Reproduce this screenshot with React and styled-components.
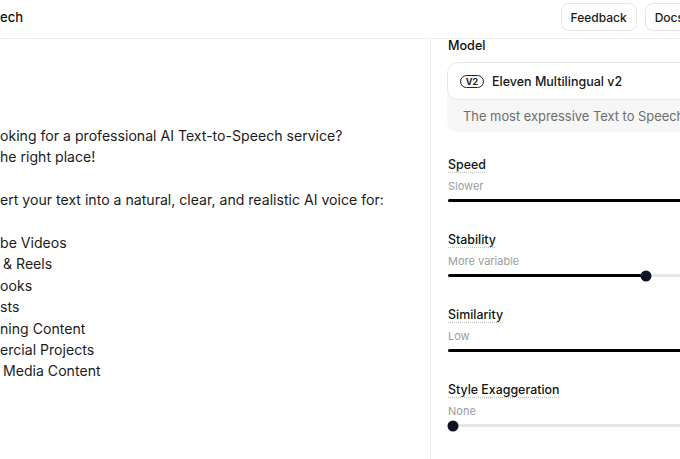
import React from "react";
import styled, { createGlobalStyle } from "styled-components";

const GlobalStyle = createGlobalStyle`
  html, body {
    margin: 0;
    padding: 0;
    background: #ffffff;
    overflow: hidden;
  }
  body {
    font-family: Inter, "Noto Sans", "Liberation Sans", sans-serif;
    color: #1a1a1a;
  }
`;

const Page = styled.div`
  width: 760px;
  height: 459px;
  display: flex;
  flex-direction: column;
`;

const Header = styled.header`
  height: 38px;
  display: flex;
  align-items: center;
  border-bottom: 1px solid #efefef;
  padding-right: 66px;
  flex-shrink: 0;
`;

const Title = styled.div`
  flex: 1;
  font-size: 13px;
  font-weight: 500;
  color: #111;
  margin-top: -4px;
`;

const HeaderActions = styled.div`
  display: flex;
  gap: 8px;
  margin-top: -4px;
`;

const GhostButton = styled.button`
  height: 28px;
  padding: 0 9px;
  border: 1px solid #e6e6e6;
  border-radius: 8px;
  background: #fff;
  font-family: inherit;
  font-size: 12px;
  font-weight: 500;
  color: #1a1a1a;
`;

const Main = styled.div`
  flex: 1;
  display: grid;
  grid-template-columns: 430px minmax(0, 1fr);
  min-height: 0;
`;

const Editor = styled.div`
  padding-top: 86px;
  font-size: 14.1px;
  line-height: 21.4px;
  color: #1c1c1c;
  white-space: pre;
  overflow: hidden;
`;

const Line = styled.div`
  min-height: 21.4px;
  padding-left: ${(p) => (p.$indent ? 3 : 0)}px;
`;

const Settings = styled.aside`
  border-left: 1px solid #efefef;
  padding: 0 16px 0 17px;
  display: flex;
  flex-direction: column;
  min-width: 0;
  overflow: hidden;

  & > * {
    flex-shrink: 0;
  }
`;

const SectionLabel = styled.div`
  font-size: 12.6px;
  font-weight: 500;
  color: #111;
  line-height: 16px;
  margin-top: -1px;
  padding-bottom: 8px;
`;

const ModelBox = styled.div`
  margin-left: -1px;
  border-radius: 12px;
  overflow: hidden;
  background:
    radial-gradient(ellipse 60px 30px at 100% 100%, #8ff3f6 0%, rgba(160, 245, 248, 0.5) 45%, rgba(247, 247, 247, 0) 100%),
    #f6f6f6;
  padding-bottom: 8px;
`;

const ModelCard = styled.div`
  display: flex;
  align-items: center;
  gap: 8px;
  height: 36px;
  padding: 0 12px;
  background: #fff;
  border: 1px solid #e8e8e8;
  border-radius: 11px;
`;

const VersionBadge = styled.span`
  display: inline-flex;
  align-items: center;
  justify-content: center;
  width: 22px;
  height: 11px;
  border: 1.3px solid #222;
  border-radius: 7px;
  font-size: 9px;
  font-weight: 700;
  color: #222;
`;

const ModelName = styled.span`
  font-size: 12.5px;
  font-weight: 500;
  color: #161616;
`;

const ModelDesc = styled.div`
  padding: 9px 16px 0;
  font-size: 12.9px;
  color: #6e6e6e;
  white-space: nowrap;
`;

const SliderGroup = styled.div`
  display: flex;
  flex-direction: column;
  margin-top: ${(p) => p.$top}px;
`;

const SliderLabel = styled.span`
  align-self: flex-start;
  font-size: 12.4px;
  font-weight: 500;
  color: #131313;
  line-height: 16px;
  text-decoration: underline dotted #c4c4c4;
  text-underline-offset: 3px;
`;

const SliderHint = styled.span`
  font-size: 11px;
  color: #9c9c9c;
  line-height: 14px;
  margin-top: 6px;
`;

const Track = styled.div`
  position: relative;
  height: 3px;
  margin-top: 6px;
  border-radius: 2px;
  background: #e6e6e6;
`;

const Fill = styled.div`
  height: 100%;
  border-radius: 2px;
  background: #000;
`;

const Thumb = styled.div`
  position: absolute;
  top: 50%;
  width: 11px;
  height: 11px;
  border-radius: 50%;
  background: #0d1321;
  transform: translate(-50%, -50%);
`;

const lines = [
  { text: "oking for a professional AI Text-to-Speech service?" },
  { text: "he right place!" },
  { text: "" },
  { text: "ert your text into a natural, clear, and realistic AI voice for:" },
  { text: "" },
  { text: "be Videos" },
  { text: "& Reels", indent: true },
  { text: "ooks" },
  { text: "sts" },
  { text: "ning Content" },
  { text: "ercial Projects" },
  { text: "Media Content", indent: true },
];

const sliders = [
  { label: "Speed", hint: "Slower", value: 100, thumb: false, top: 25 },
  { label: "Stability", hint: "More variable", value: 67, thumb: true, top: 30 },
  { label: "Similarity", hint: "Low", value: 100, thumb: false, top: 30 },
  { label: "Style Exaggeration", hint: "None", value: 1.7, thumb: true, top: 30 },
  { label: "Speaker boost", hint: "", value: 0, thumb: false, top: 33 },
];

function Slider({ label, hint, value, thumb, top }) {
  return (
    <SliderGroup $top={top}>
      <SliderLabel>{label}</SliderLabel>
      <SliderHint>{hint}</SliderHint>
      <Track>
        <Fill style={{ width: `${value}%` }} />
        {thumb && <Thumb style={{ left: `${value}%` }} />}
      </Track>
    </SliderGroup>
  );
}

export default function App() {
  return (
    <>
      <GlobalStyle />
      <Page>
        <Header>
          <Title>ech</Title>
          <HeaderActions>
            <GhostButton>Feedback</GhostButton>
            <GhostButton>Docs</GhostButton>
          </HeaderActions>
        </Header>
        <Main>
          <Editor>
            {lines.map((l, i) => (
              <Line key={i} $indent={l.indent}>
                {l.text}
              </Line>
            ))}
          </Editor>
          <Settings>
            <SectionLabel>Model</SectionLabel>
            <ModelBox>
              <ModelCard>
                <VersionBadge>V2</VersionBadge>
                <ModelName>Eleven Multilingual v2</ModelName>
              </ModelCard>
              <ModelDesc>The most expressive Text to Speech model</ModelDesc>
            </ModelBox>
            {sliders.map((s) => (
              <Slider key={s.label} {...s} />
            ))}
          </Settings>
        </Main>
      </Page>
    </>
  );
}
